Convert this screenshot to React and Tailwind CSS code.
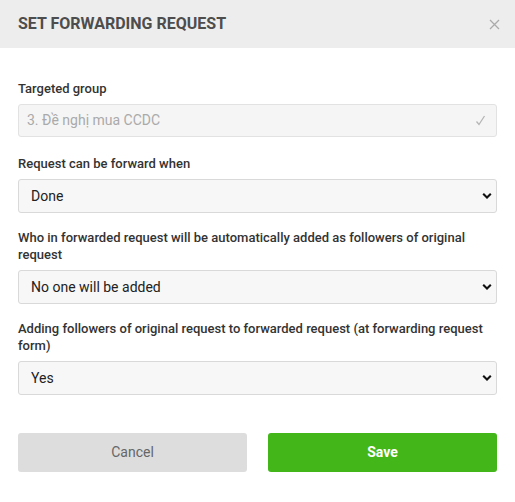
import React, { useState } from "react";

const Chevron = () => (
  <svg width="10" height="7" viewBox="0 0 10 7" className="pointer-events-none absolute right-[5px] top-1/2 -translate-y-1/2">
    <path d="M1.2 1.3 L5 5 L8.8 1.3" fill="none" stroke="#111" strokeWidth="2.1" />
  </svg>
);

const SelectField = ({ label, value, options, onChange, className }) => (
  <div className={className}>
    <label className="mb-[7px] block text-[13px] font-medium leading-[17px] text-[#333]">{label}</label>
    <div className="relative">
      <select
        value={value}
        onChange={(e) => onChange(e.target.value)}
        className="block h-[34px] w-full appearance-none rounded-[3px] border border-[#d9d9d9] bg-[#f7f7f7] pl-[12px] pr-6 text-[14px] text-[#222] outline-none"
      >
        {options.map((o) => (
          <option key={o}>{o}</option>
        ))}
      </select>
      <Chevron />
    </div>
  </div>
);

export default function App() {
  const [when, setWhen] = useState("Done");
  const [who, setWho] = useState("No one will be added");
  const [adding, setAdding] = useState("Yes");

  return (
    <div className="min-h-[502px] w-[515px] bg-white font-['Roboto',sans-serif]">
      <div className="flex h-[48px] items-center justify-between bg-[#ededed] pl-[18px] pr-[15px]">
        <h2 className="text-[16px] font-bold text-[#4d4d4d]">SET FORWARDING REQUEST</h2>
        <button className="text-[#aaa]">
          <svg width="11" height="11" viewBox="0 0 11 11">
            <path d="M1 1 L10 10 M10 1 L1 10" stroke="#aaa" strokeWidth="1.3" />
          </svg>
        </button>
      </div>

      <div className="flex flex-col px-[18px] pt-[32px]">
        <div>
          <label className="mb-[7px] block text-[13px] font-medium leading-[17px] text-[#333]">Targeted group</label>
          <div className="flex h-[33px] items-center justify-between rounded-[3px] border border-[#e2e2e2] bg-[#f5f5f5] pl-[8px] pr-[10px] text-[14px] text-[#aaa]">
            <span>3. Đề nghị mua CCDC</span>
            <svg width="11" height="11" viewBox="0 0 11 11">
              <path d="M1.5 6.5 L4 9.5 L9.5 1" fill="none" stroke="#b5b5b5" strokeWidth="1.3" />
            </svg>
          </div>
        </div>

        <SelectField
          className="mt-[18px]"
          label="Request can be forward when"
          value={when}
          onChange={setWhen}
          options={["Done", "Approved", "Any time"]}
        />
        <SelectField
          className="mt-4"
          label="Who in forwarded request will be automatically added as followers of original request"
          value={who}
          onChange={setWho}
          options={["No one will be added", "Requester", "All followers"]}
        />
        <SelectField
          className="mt-4"
          label="Adding followers of original request to forwarded request (at forwarding request form)"
          value={adding}
          onChange={setAdding}
          options={["Yes", "No"]}
        />
      </div>

      <div className="mt-[38px] flex gap-[21px] px-[18px]">
        <button className="h-[39px] flex-1 rounded-[3px] bg-[#dddddd] text-[14px] text-[#666]">Cancel</button>
        <button className="h-[39px] flex-1 rounded-[3px] bg-[#43b619] text-[14px] font-bold text-white">Save</button>
      </div>
    </div>
  );
}
